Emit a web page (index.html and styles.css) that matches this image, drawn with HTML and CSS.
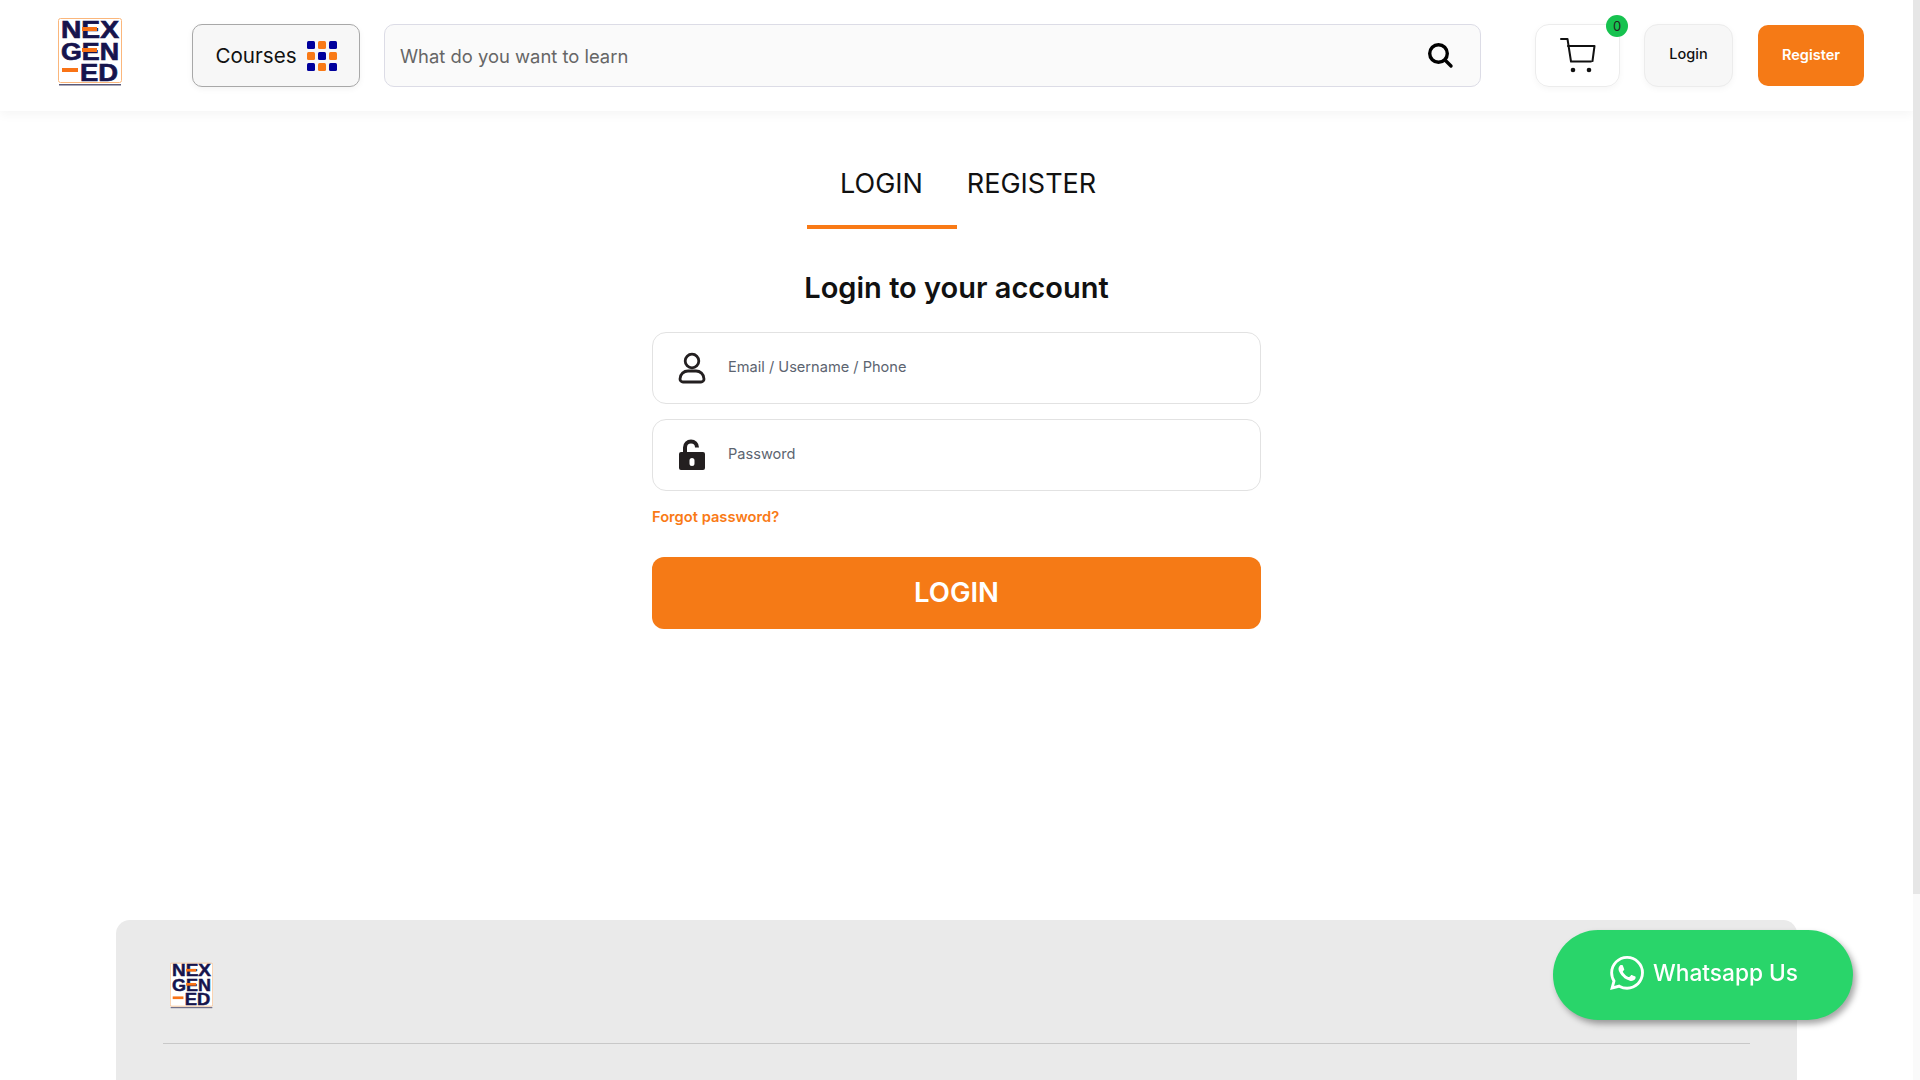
FILE: index.html

```html
<!DOCTYPE html>
<html lang="en">
<head>
  <meta charset="UTF-8">
  <title>NexGenEd - Login</title>
  <link rel="stylesheet" href="styles.css">
</head>
<body>
  <div class="page">
    <header class="topbar">
      <a class="logo" href="#">
        <svg viewBox="0 0 64 69" width="64" height="69">
          <rect x="0.5" y="0.5" width="63" height="64" rx="2" fill="#fff" stroke="#fbb77c"/>
          <g class="logo-text">
            <text x="32" y="20" textLength="58" lengthAdjust="spacingAndGlyphs" text-anchor="middle">NEX</text>
            <text x="32" y="42" textLength="58" lengthAdjust="spacingAndGlyphs" text-anchor="middle">GEN</text>
            <text x="41" y="63" textLength="38" lengthAdjust="spacingAndGlyphs" text-anchor="middle">ED</text>
          </g>
          <rect x="24" y="9" width="15" height="4" fill="#f97316"/>
          <rect x="24" y="30" width="15" height="4" fill="#f97316"/>
          <rect x="4" y="50" width="16" height="4" fill="#f97316"/>
          <rect x="1" y="66" width="62" height="1.5" fill="#5a5a7a"/>
        </svg>
      </a>
      <button class="courses-btn">
        <span>Courses</span>
        <span class="dots">
          <i class="blue"></i><i class="orange"></i><i class="blue"></i>
          <i class="orange"></i><i class="blue"></i><i class="orange"></i>
          <i class="blue"></i><i class="orange"></i><i class="blue"></i>
        </span>
      </button>
      <div class="search">
        <span class="search-text">What do you want to learn</span>
        <svg viewBox="0 0 28 28" width="28" height="28" fill="none" stroke="#000" stroke-width="3.4" stroke-linecap="round">
          <circle cx="12.5" cy="11.5" r="8.8"/>
          <path d="M19 18l6 6"/>
        </svg>
      </div>
      <a class="cart" href="#">
        <svg viewBox="0 0 36 36" width="36" height="36" fill="none" stroke="#111" stroke-width="2" stroke-linejoin="round" stroke-linecap="round">
          <path d="M1 1h6.500l3.500 22.500h20"/>
          <path d="M8 8h26.500l-2 15"/>
          <circle cx="13" cy="32" r="2.300" fill="#111" stroke="none"/>
          <circle cx="29" cy="32" r="2.300" fill="#111" stroke="none"/>
        </svg>
        <span class="badge">0</span>
      </a>
      <a class="btn-login" href="#">Login</a>
      <a class="btn-register" href="#">Register</a>
    </header>

    <main class="auth">
      <div class="tabs">
        <a class="tab active" href="#">LOGIN</a>
        <a class="tab" href="#">REGISTER</a>
      </div>
      <h1>Login to your account</h1>
      <form class="login-form">
        <div class="field">
          <svg viewBox="0 0 28 32" width="28" height="32" fill="none" stroke="#231f20" stroke-width="2.800">
            <circle cx="14" cy="9" r="6.800"/>
            <path d="M5 30a3 3 0 0 1-3-3c0-5 4-8 8-8h8c4 0 8 3 8 8a3 3 0 0 1-3 3z"/>
          </svg>
          <span>Email / Username / Phone</span>
        </div>
        <div class="field">
          <svg viewBox="0 0 28 32" width="28" height="32">
            <path d="M7 14V8.500a6 6 0 0 1 12 0" fill="none" stroke="#231f20" stroke-width="4"/>
            <path fill-rule="evenodd" fill="#231f20" d="M3 13h22a2 2 0 0 1 2 2v14a2 2 0 0 1-2 2H3a2 2 0 0 1-2-2V15a2 2 0 0 1 2-2zm11 6a2.500 2.500 0 0 0-2.500 2.500v3a2.500 2.500 0 0 0 5 0v-3A2.500 2.500 0 0 0 14 19z"/>
          </svg>
          <span>Password</span>
        </div>
        <a class="forgot" href="#">Forgot password?</a>
        <button type="button" class="submit">LOGIN</button>
      </form>
    </main>

    <footer class="footer">
      <div class="footer-logo">
        <svg viewBox="0 0 64 69" width="43" height="48">
          <rect x="0.5" y="0.5" width="63" height="64" rx="2" fill="#fff" stroke="#fbb77c"/>
          <g class="logo-text">
            <text x="32" y="20" textLength="58" lengthAdjust="spacingAndGlyphs" text-anchor="middle">NEX</text>
            <text x="32" y="42" textLength="58" lengthAdjust="spacingAndGlyphs" text-anchor="middle">GEN</text>
            <text x="41" y="63" textLength="38" lengthAdjust="spacingAndGlyphs" text-anchor="middle">ED</text>
          </g>
          <rect x="24" y="9" width="15" height="4" fill="#f97316"/>
          <rect x="24" y="30" width="15" height="4" fill="#f97316"/>
          <rect x="4" y="50" width="16" height="4" fill="#f97316"/>
          <rect x="1" y="66" width="62" height="1.5" fill="#5a5a7a"/>
        </svg>
      </div>
      <hr>
    </footer>

    <a class="whatsapp" href="#">
      <svg viewBox="0 0 24 24" width="34" height="34" fill="#fff">
        <path d="M17.472 14.382c-.297-.149-1.758-.867-2.030-.967-.273-.099-.471-.148-.670.150-.197.297-.767.966-.940 1.164-.173.199-.347.223-.644.075-.297-.150-1.255-.463-2.390-1.475-.883-.788-1.480-1.761-1.653-2.059-.173-.297-.018-.458.130-.606.134-.133.298-.347.446-.520.149-.174.198-.298.298-.497.099-.198.050-.371-.025-.520-.075-.149-.669-1.612-.916-2.207-.242-.579-.487-.500-.669-.510-.173-.008-.371-.010-.570-.010-.198 0-.520.074-.792.372-.272.297-1.040 1.016-1.040 2.479 0 1.462 1.065 2.875 1.213 3.074.149.198 2.096 3.200 5.077 4.487.709.306 1.262.489 1.694.625.712.227 1.360.195 1.871.118.571-.085 1.758-.719 2.006-1.413.248-.694.248-1.289.173-1.413-.074-.124-.272-.198-.570-.347m-5.421 7.403h-.004a9.870 9.870 0 0 1-5.031-1.378l-.361-.214-3.741.982.998-3.648-.235-.374a9.860 9.860 0 0 1-1.510-5.260c.001-5.450 4.436-9.884 9.888-9.884 2.640 0 5.122 1.030 6.988 2.898a9.825 9.825 0 0 1 2.893 6.994c-.003 5.450-4.437 9.884-9.885 9.884m8.413-18.297A11.815 11.815 0 0 0 12.050 0C5.495 0 .160 5.335.157 11.892c0 2.096.547 4.142 1.588 5.945L.057 24l6.305-1.654a11.882 11.882 0 0 0 5.683 1.448h.005c6.554 0 11.890-5.335 11.893-11.893a11.821 11.821 0 0 0-3.480-8.413z"/>
      </svg>
      <span>Whatsapp Us</span>
    </a>
  </div>
  <div class="scroll-track"><div class="scroll-thumb"></div></div>
</body>
</html>
```

FILE: styles.css

```css
html, body {
  margin: 0;
  height: 100%;
  overflow: hidden;
  background: #fff;
  font-family: Inter, "Open Sans", sans-serif;
  color: #111;
}
a {
  color: inherit;
  text-decoration: none;
}
.page {
  width: 1913px;
  height: 1080px;
  overflow: hidden;
}
.scroll-track {
  position: fixed;
  top: 0;
  right: 0;
  width: 7px;
  height: 100%;
  background: #fafafa;
}
.scroll-thumb {
  height: 894px;
  background: #e6e6e6;
}

/* header */
.topbar {
  height: 111px;
  box-sizing: border-box;
  padding: 0 49px 0 58px;
  display: flex;
  align-items: center;
  background: #fff;
  box-shadow: 0 4px 10px rgba(0,0,0,0.04);
}
.logo {
  display: flex;
  width: 64px;
  margin: -7px 70px 0 0;
}
.logo-text {
  font-family: "Liberation Sans", Arial, sans-serif;
  font-weight: 700;
  font-size: 24px;
  fill: #16144d;
  stroke: #16144d;
  stroke-width: 0.7px;
}
.courses-btn {
  width: 168px;
  height: 63px;
  flex: none;
  margin-right: 24px;
  padding-bottom: 1px;
  display: flex;
  align-items: center;
  justify-content: center;
  gap: 10px;
  background: #f7f7f7;
  border: 1px solid #a8a8a8;
  border-radius: 10px;
  font: inherit;
  font-size: 20.6px;
  color: #111;
  box-shadow: 0 2px 6px rgba(0,0,0,0.05);
}
.dots {
  display: grid;
  grid-template-columns: repeat(3, 8px);
  grid-auto-rows: 8px;
  gap: 3px;
}
.dots i {
  border-radius: 1.5px;
}
.dots .blue { background: #00009c; }
.dots .orange { background: #f97a16; }
.search {
  flex: 1;
  height: 63px;
  box-sizing: border-box;
  margin-right: 54px;
  padding: 0 26px 0 15px;
  display: flex;
  align-items: center;
  justify-content: space-between;
  background: #fafafa;
  border: 1px solid #dcdce6;
  border-radius: 10px;
}
.search-text {
  font-size: 18.4px;
  color: #666;
}
.cart {
  position: relative;
  width: 85px;
  height: 63px;
  box-sizing: border-box;
  margin-right: 24px;
  flex: none;
  display: flex;
  align-items: center;
  justify-content: center;
  border: 1px solid #ececec;
  border-radius: 14px;
  box-shadow: 0 2px 6px rgba(0,0,0,0.04);
}
.badge {
  position: absolute;
  top: -10px;
  right: -9px;
  width: 22px;
  height: 22px;
  border-radius: 50%;
  background: #16c24f;
  font-size: 13px;
  line-height: 22px;
  text-align: center;
  color: #222;
}
.btn-login {
  width: 89px;
  height: 63px;
  box-sizing: border-box;
  margin-right: 25px;
  padding-bottom: 4px;
  flex: none;
  display: flex;
  align-items: center;
  justify-content: center;
  background: #f7f7f7;
  border: 1px solid #ececec;
  border-radius: 14px;
  font-size: 14.5px;
  font-weight: 500;
  box-shadow: 0 2px 6px rgba(0,0,0,0.04);
}
.btn-register {
  width: 106px;
  height: 61px;
  box-sizing: border-box;
  padding-bottom: 3px;
  flex: none;
  display: flex;
  align-items: center;
  justify-content: center;
  background: #f57a16;
  border-radius: 10px;
  color: #fff;
  font-size: 14.5px;
  font-weight: 600;
}

/* login form */
.auth {
  width: 609px;
  height: 809px;
  margin: 0 auto;
  display: flex;
  flex-direction: column;
  align-items: center;
}
.tabs {
  margin-top: 51px;
  display: flex;
}
.tab {
  width: 150px;
  height: 67px;
  box-sizing: border-box;
  border-bottom: 4px solid transparent;
  font-size: 27px;
  line-height: 44px;
  text-align: center;
}
.tab.active {
  border-bottom-color: #f97a16;
}
h1 {
  margin: 39px 0 24px;
  font-size: 29px;
  line-height: 40px;
  font-weight: 600;
}
.login-form {
  width: 100%;
  display: flex;
  flex-direction: column;
}
.field {
  height: 72px;
  box-sizing: border-box;
  margin-bottom: 15px;
  padding-left: 25px;
  display: flex;
  align-items: center;
  gap: 22px;
  border: 1px solid #e2e2e2;
  border-radius: 14px;
  font-size: 14.6px;
  color: #5c6470;
}
.field span {
  margin-top: -3px;
}
.forgot {
  margin-top: 1px;
  font-size: 14.7px;
  font-weight: 600;
  line-height: 20px;
  color: #f97a16;
}
.submit {
  height: 72px;
  margin-top: 30px;
  padding-bottom: 4px;
  border: 0;
  border-radius: 12px;
  background: #f57a16;
  color: #fff;
  font: inherit;
  font-size: 27.5px;
  font-weight: 600;
}

/* footer */
.footer {
  width: 1681px;
  height: 300px;
  box-sizing: border-box;
  margin: 0 auto;
  padding: 42px 47px 0;
  background: #eaeaea;
  border-radius: 14px 14px 0 0;
}
.footer-logo {
  display: flex;
  padding-left: 7px;
}
.footer hr {
  margin: 33px 0 0;
  border: 0;
  border-top: 1px solid #c8c8c8;
}
.whatsapp {
  position: fixed;
  left: 1553px;
  top: 930px;
  width: 300px;
  height: 90px;
  box-sizing: border-box;
  padding: 0 0 5px 2px;
  display: flex;
  align-items: center;
  justify-content: center;
  gap: 9px;
  background: #29d56a;
  border-radius: 45px;
  color: #fff;
  font-size: 22.7px;
  font-weight: 500;
  box-shadow: 3px 4px 6px rgba(0,0,0,0.35);
}
```
